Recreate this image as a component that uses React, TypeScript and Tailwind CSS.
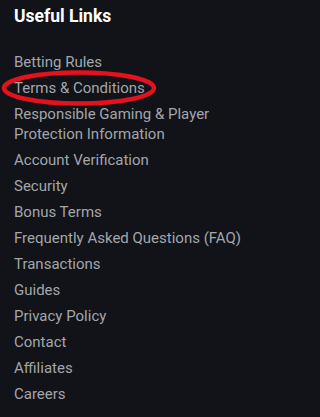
const LINKS = [
  'Betting Rules',
  'Terms & Conditions',
  'Responsible Gaming & Player Protection Information',
  'Account Verification',
  'Security',
  'Bonus Terms',
  'Frequently Asked Questions (FAQ)',
  'Transactions',
  'Guides',
  'Privacy Policy',
  'Contact',
  'Affiliates',
  'Careers',
]

export default function App() {
  return (
    <div className="min-h-[417px] w-full bg-[#111318] px-[14px] pt-[4px] font-['Roboto',sans-serif]">
      <h3 className="text-[17.5px] font-bold leading-[24px] text-white">Useful Links</h3>
      <ul className="mt-[24px] flex w-[237px] flex-col gap-[6px]">
        {LINKS.map(link => (
          <li key={link} className="relative">
            <a href="#" className="block text-[15px] leading-[20px] text-[#a3a6ab]">
              {link}
            </a>
            {/* red annotation ring around the highlighted link */}
            {link === 'Terms & Conditions' && (
              <svg className="pointer-events-none absolute left-[-15px] top-[-10px]" width="160" height="40" viewBox="0 0 160 40">
                <ellipse cx="80" cy="20" rx="75" ry="15.5" fill="none" stroke="#e3121c" strokeWidth="4.5" />
              </svg>
            )}
          </li>
        ))}
      </ul>
    </div>
  )
}
